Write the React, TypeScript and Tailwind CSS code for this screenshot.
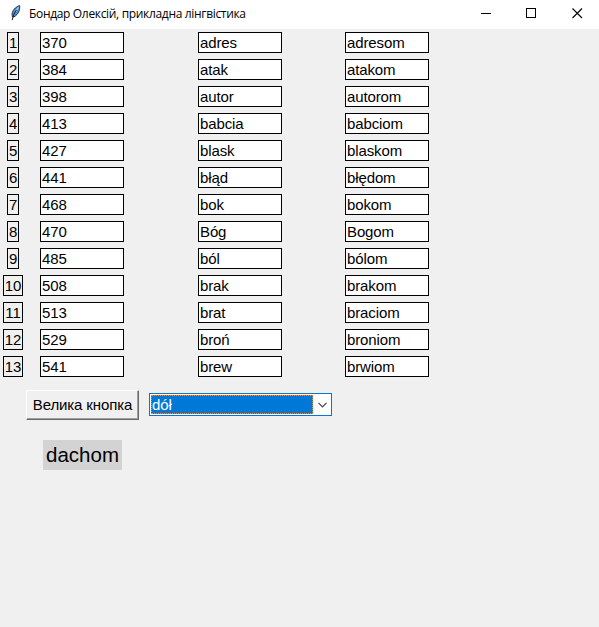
const rows: [string, string, string][] = [
  ['370', 'adres', 'adresom'],
  ['384', 'atak', 'atakom'],
  ['398', 'autor', 'autorom'],
  ['413', 'babcia', 'babciom'],
  ['427', 'blask', 'blaskom'],
  ['441', 'błąd', 'błędom'],
  ['468', 'bok', 'bokom'],
  ['470', 'Bóg', 'Bogom'],
  ['485', 'ból', 'bólom'],
  ['508', 'brak', 'brakom'],
  ['513', 'brat', 'braciom'],
  ['529', 'broń', 'broniom'],
  ['541', 'brew', 'brwiom'],
];

function Feather() {
  return (
    <svg width="16" height="16" viewBox="0 0 16 16">
      <path d="M4.6 12 C3 8.5 5 3 11.5 0.5 C12.4 3.5 10.8 9.5 5.8 12 Z" fill="#4f8fd0" stroke="#1b2330" strokeWidth="0.9" />
      <path d="M7 7.5 C7.4 4.8 9 2.8 11 1.6 C10.6 4 9.6 6.2 7 7.5 Z" fill="#a5cdf0" />
      <path d="M4.3 15.2 C4.6 12 6 8.5 8.6 4.8" fill="none" stroke="#111" strokeWidth="0.9" />
    </svg>
  );
}

function TitleBar() {
  return (
    <header className="flex h-[29px] items-start bg-white">
      <div className="ml-2 mt-[5px] shrink-0">
        <Feather />
      </div>
      <h1 className="ml-[5px] mt-[5px] w-[300px] whitespace-nowrap font-['Open_Sans','Noto_Sans',sans-serif] text-[12px] leading-[17px] tracking-[-0.33px] text-black">
        Бондар Олексій, прикладна лінгвістика
      </h1>
      <svg className="ml-auto mr-4 mt-2 shrink-0" width="103" height="11" fill="none" stroke="#000" shapeRendering="crispEdges">
        <path d="M1 5.5h10" />
        <rect x="46.5" y="0.5" width="9" height="9" />
        <path d="M92.5 0.5l9.5 9.5M102 0.5l-9.5 9.5" shapeRendering="geometricPrecision" strokeWidth="1.1" />
      </svg>
    </header>
  );
}

function Cell({ text }: { text: string }) {
  return (
    <div className="h-[21px] w-[84px] border border-black bg-white pl-px leading-[19px]">{text}</div>
  );
}

export default function App() {
  return (
    <div className="h-[627px] w-[599px] overflow-hidden bg-[#f0f0f0] font-['Liberation_Sans',Arial,sans-serif] text-[15px] tracking-[-0.12px] text-black">
      <TitleBar />
      <main>
        <div className="grid grid-cols-[26px_158px_147px_84px] gap-y-1.5 pt-[3px]">
          {rows.map(([num, word, dative], i) => (
            <div key={num} className="col-span-4 grid grid-cols-subgrid">
              <div className="flex justify-center">
                <div className={`h-[21px] border border-black text-center leading-[19px] ${i < 9 ? 'w-3' : 'w-5'}`}>
                  <span className="-mx-1">{i + 1}</span>
                </div>
              </div>
              <div className="pl-3.5"><Cell text={num} /></div>
              <div className="pl-3.5"><Cell text={word} /></div>
              <div className="pl-3.5"><Cell text={dative} /></div>
            </div>
          ))}
        </div>
        <div className="mt-[13px] flex items-start pl-[26px]">
          <button className="h-[30px] w-[113px] whitespace-nowrap border border-b-[#696969] border-l-white border-r-[#696969] border-t-white text-center leading-[28px] shadow-[inset_-1px_-1px_0_#a0a0a0]">
            Велика кнопка
          </button>
          <div className="ml-2.5 mt-[3px] flex h-[23px] w-[183px] border border-[#0078d7] bg-white p-px">
            <div className="h-[19px] w-[162px] border border-dotted border-[#ff8728] bg-[#0078d7] leading-[18px] text-white">
              dół
            </div>
            <svg className="ml-[5px] mt-[7px]" width="9" height="6" fill="none" stroke="#444" strokeWidth="1.2">
              <path d="M0.5 0.8L4.5 4.8L8.5 0.8" />
            </svg>
          </div>
        </div>
        <div className="ml-[43px] mt-5 h-[30px] w-[79px] bg-[#d3d3d3] text-center text-[20.5px] leading-[30px] tracking-normal">
          dachom
        </div>
      </main>
    </div>
  );
}
